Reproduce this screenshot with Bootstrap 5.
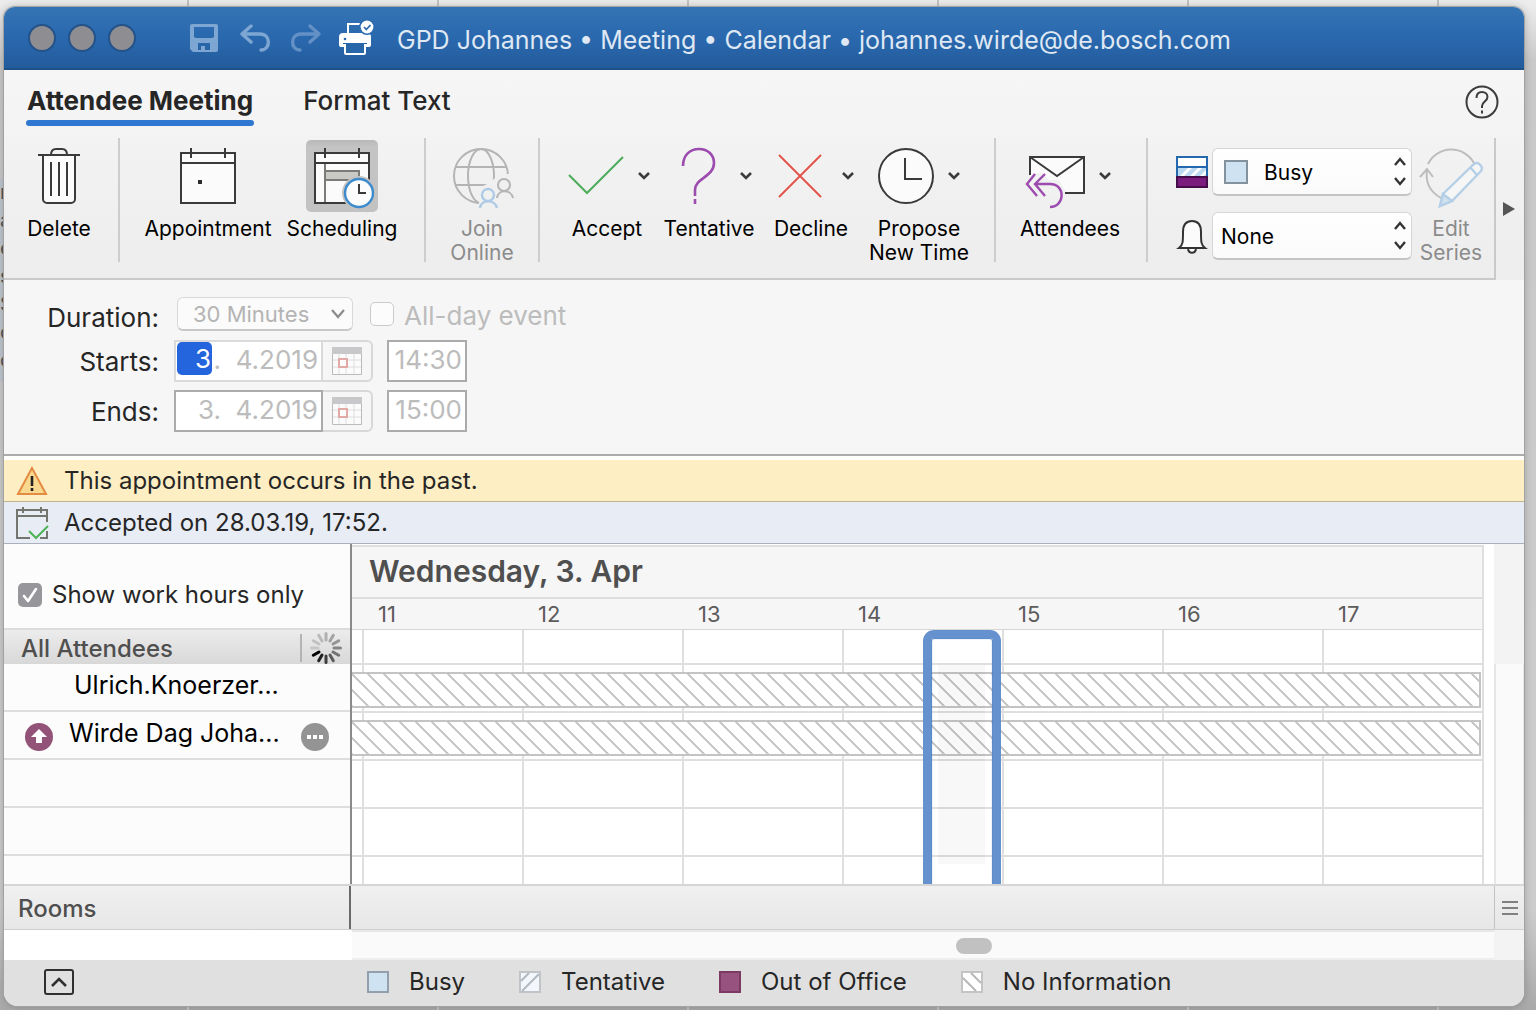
<!DOCTYPE html>
<html lang="en">
<head>
<meta charset="utf-8">
<meta name="viewport" content="width=device-width, initial-scale=1">
<title>GPD Johannes • Meeting • Calendar</title>
<link href="https://cdn.jsdelivr.net/npm/bootstrap@5.3.0/dist/css/bootstrap.min.css" rel="stylesheet">
<style>
  body { font-family: Inter, "Liberation Sans", sans-serif; color: #262626; line-height: 24px; min-height: 100vh;
    background: linear-gradient(to bottom, #ececec 0, #ececec 6px, #c9c9c9 60px, #cdcdcd 90%, #a9a9a9 100%); }
  svg { display: block; overflow: visible; flex: none; }
  button { color: inherit; }
  .desktop { padding: 7px 12px 4px 4px; min-height: 100vh; position: relative; overflow: hidden; }
  .desk-cols { position: absolute; inset: 0; background: repeating-linear-gradient(to right, transparent 0 187px, #c4c4c4 187px 189px, transparent 189px 250px); width: 1439px; }
  .desk-list { position: absolute; left: 0; top: 178px; width: 20px; font-size: 20px; line-height: 28px; color: #555; background: #bfc6ce; padding-bottom: 8px; }
  .app-window { position: relative; border-radius: 11px 11px 14px 14px; overflow: hidden; background: #fff; min-height: calc(100vh - 11px); box-shadow: 0 0 0 1px #a2a2a2, 0 0 8px rgba(0,0,0,.25); }
  .title-bar { height: 63px; background: linear-gradient(#3474b4, #2a68ae 50%, #235c9c); border-bottom: 2px solid #1f5189; color: #dfe8f3; font-size: 25px; padding-left: 24px; }
  .traffic { width: 28px; height: 28px; border-radius: 50%; background: #8e8d92; border: 2px solid #255288; padding: 0; }
  .tool-ic { background: none; border: 0; padding: 0; }
  .quick { margin-left: 54px; gap: 19px; }
  .caption-text { margin-left: 22px; padding-top: 4px; }
  .ribbon { background: linear-gradient(#f6f6f6, #f1f1f1 50%, #ededed); }
  .tabs-row { height: 68px; padding: 15px 25px 0 23px; gap: 50px; }
  .tab-link { font-size: 26px; line-height: 32px; color: #262626; text-decoration: none; font-weight: 500; height: 41px; }
  .tab-link.current { font-weight: 700; position: relative; }
  .tab-link.current::after { content: ""; position: absolute; left: -1px; right: -1px; bottom: 0; height: 6px; border-radius: 3px; background: #3077d1; }
  .tools { border-bottom: 2px solid #c9c9c9; border-right: 2px solid #c9c9c9; height: 142px; }
  .tool-group { height: 124px; border-right: 2px solid #cdcdcd; }
  .tool-group.final { border: 0; }
  .tool-btn { background: none; border: 0; padding: 2px 0 0; font-size: 21px; line-height: 24px; color: #000; display: flex; flex-direction: column; align-items: center; align-self: flex-start; gap: 5px; white-space: nowrap; }
  .tool-btn:disabled { color: #8b8b8b; }
  .pic { height: 72px; display: flex; align-items: center; gap: 14px; }
  .reply .pic { padding-left: 4px; }
  .pic.pressed { background: linear-gradient(#b9b9b9, #c4c4c4 10%, #c2c2c2); width: 72px; border-radius: 5px; justify-content: center; }
  .w-sm { width: 80px; } .w-md { width: 102px; } .w-lg { width: 114px; } .w-xl { width: 134px; }
  .pick { position: relative; height: 48px; }
  .pick select { appearance: none; width: 100%; height: 100%; border: 1px solid #d6d6d6; border-bottom: 2px solid #c4c4c4; border-radius: 6px; background: linear-gradient(#fff, #fafafa); font-size: 21px; color: #000; padding: 3px 8px 0; }
  .pick svg { position: absolute; right: 6px; top: 10px; pointer-events: none; }
  .pick.with-swatch select { padding-left: 51px; }
  .pick i { position: absolute; left: 12px; top: 12px; width: 24px; height: 24px; background: #cfe2f2; border: 2px solid #84929e; }
  .form-area { background: #f6f6f6; border-bottom: 2px solid #a9abad; padding: 16px 0 22px; font-size: 26px; display: grid; gap: 8px 15px; grid-template: 36px 42px 42px / 155px 1fr; }
  .form-area .name { text-align: right; line-height: 44px; height: 36px; }
  .form-line { display: flex; align-items: center; color: #bcbcbc; }
  .length { position: relative; width: 176px; margin-left: 3px; height: 34px; }
  .length select { appearance: none; width: 100%; height: 100%; border: 1px solid #d8d8d8; border-bottom: 2px solid #c8c8c8; border-radius: 6px; background: #fbfbfb; color: #b4b4b4; font-size: 22px; padding: 0 15px; opacity: 1; }
  .length svg { position: absolute; right: 8px; top: 12px; }
  .tick { appearance: none; width: 24px; height: 24px; border: 1px solid #cbcbcb; border-radius: 5px; background: #fcfcfc; margin: 0; }
  .tick.on { border: 0; background: #97969b url("data:image/svg+xml,%3Csvg xmlns='http://www.w3.org/2000/svg' viewBox='0 0 24 24'%3E%3Cpath d='M6 13l4 5 8-12' fill='none' stroke='white' stroke-width='2.6' stroke-linecap='round' stroke-linejoin='round'/%3E%3C/svg%3E"); }
  .day-box { position: relative; }
  .day-box input, .clock-box { border: 2px solid #a9abad; background: #fff; color: #bcbcbc; font-size: 26px; height: 42px; text-align: right; padding: 0 3px 4px; border-radius: 0; }
  .day-box input { width: 149px; display: block; }
  .day-box.light input { border-color: #dadada; }
  .day-box mark { position: absolute; left: 3px; top: 2px; width: 35px; height: 33px; border-radius: 5px; background: #2464dc; color: #fff; padding: 0 1px 0 0; line-height: 34px; text-align: right; }
  .clock-box { width: 80px; margin-left: 14px; }
  .cal-btn { width: 50px; height: 42px; border: 2px solid #d8d8d8; border-left: 0; border-radius: 0 6px 6px 0; background: #f6f6f6; padding: 0; display: grid; place-items: center; }
  .notice { height: 42px; display: flex; align-items: center; font-size: 24px; padding-left: 12px; gap: 16px; }
  .notice.warn { margin-top: 4px; background: #fdeec4; border-bottom: 1px solid #bfb48e; }
  .notice.info { background: #e8ecf5; border-bottom: 1px solid #aab0bd; }
  .side { width: 346px; background: #fcfcfc; }
  .side-top { height: 84px; padding: 18px 0 0 14px; gap: 10px; font-size: 24px; }
  .side-head { height: 36px; border-top: 2px solid #dcdcdc; background: linear-gradient(#ececec, #d8d8d8); color: #4f4f4f; font-size: 24px; font-weight: 500; padding: 4px 8px 0 17px; }
  .side-head .busy { border-left: 2px solid #b4b4b4; height: 28px; padding-left: 8px; }
  .person { height: 48px; border-bottom: 2px solid #dedede; color: #000; font-size: 25px; padding: 0 21px 4px 20px; }
  .person.short { height: 28px; border: 0; }
  .board { border-left: 2px solid #8a8a8a; }
  .hours-pane { margin-right: 10px; border-right: 2px solid #dfdfdf; }
  .day-head { background: #f6f6f6; border-top: 2px solid #dedede; border-bottom: 2px solid #dedede; height: 54px; margin-top: 1px; padding-left: 17px; font-size: 30px; line-height: 49px; font-weight: 600; color: #4f4f4f; }
  .hour-head { background: #f6f6f6; border-bottom: 1px solid #d6d6d6; height: 31px; padding-left: 10px; font-size: 22px; line-height: 31px; color: #5c5c5c; }
  .hour-head span { flex: 1 1 0; padding-left: 16px; }
  .slots { position: relative; height: 254px; overflow: hidden; }
  .slot-cols { position: absolute; inset: 0; padding-left: 10px; display: flex; }
  .slot-cols span { flex: 1 1 0; border-left: 2px solid #dfdfdf; }
  .slot-row { position: relative; height: 48px; border-bottom: 2px solid #dfdfdf; padding: 7px 1px 0 0; }
  .slot-row.lead-in { height: 35px; }
  .unknown { height: 36px; border: 2px solid #c4c4c4; border-left: 0; background: #fff linear-gradient(45deg, #c6c6c6 3%, transparent 5%, transparent 45%, #c6c6c6 47%, #c6c6c6 53%, transparent 55%, transparent 95%, #c6c6c6 97%) 0 0 / 16px 16px; }
  .pickframe { position: absolute; left: 50.5%; width: 6.9%; top: 0; bottom: -20px; border: 8px solid #6592ce; border-radius: 11px; box-shadow: inset 0 0 1px 1px #4d80c3, 0 0 0 0 #4d80c3; }
  .pickframe span { position: absolute; left: 7px; right: 8px; top: 27px; height: 199px; background: rgba(0,0,0,.027); }
  .gutter { width: 30px; background: linear-gradient(#f3f3f3 120px, #fafafa 120px); position: relative; }
  .gutter span { display: block; margin-top: 120px; height: 220px; border-left: 2px solid #e6e6e6; border-right: 1px solid #e6e6e6; }
  .rooms { height: 46px; border-top: 2px solid #d6d6d6; border-bottom: 1px solid #cfcfcf; background: linear-gradient(#f0f0f0, #e7e7e7); color: #4f4f4f; font-size: 24px; font-weight: 500; }
  .rooms .cap { width: 347px; padding-left: 14px; border-right: 2px solid #6a6a6a; height: 43px; line-height: 45px; }
  .rooms button { width: 30px; border: 0; border-left: 1px solid #c2c2c2; background: none; padding: 0 0 0 7px; }
  .hscroll { height: 30px; }
  .hscroll .blank { width: 348px; }
  .hscroll .track { background: #fafafa; border-top: 2px solid #e8e8e8; border-bottom: 2px solid #eee; position: relative; }
  .hscroll .thumb { position: absolute; left: 52.9%; top: 6px; width: 36px; height: 16px; border-radius: 8px; background: #c1c1c1; }
  .hscroll .corner { width: 30px; background: #f3f3f3; }
  .legend-bar { height: 46px; background: #e0e0e0; font-size: 24px; padding: 0 0 2px 40px; }
  .expand { width: 30px; height: 26px; border: 2px solid #303030; border-radius: 3px; background: none; padding: 0; margin-right: 293px; display: grid; place-items: center; }
  .legend { gap: 54px; }
  .legend span { display: flex; align-items: center; gap: 20px; white-space: nowrap; }
</style>
<script src="https://cdn.jsdelivr.net/npm/bootstrap@5.3.0/dist/js/bootstrap.bundle.min.js"></script>
</head>
<body>
<div class="desktop">
  <div class="desk-cols"></div>
  <div class="desk-list" aria-hidden="true">r<br>a<br>e<br>s<br>S<br>c<br>c</div>
  <main class="app-window d-flex flex-column">
    <header class="title-bar d-flex align-items-center">
      <div class="d-flex" style="gap:12px">
        <button class="traffic" aria-label="Close"></button><button class="traffic" aria-label="Minimise"></button><button class="traffic" aria-label="Zoom"></button>
      </div>
      <div class="quick d-flex align-items-center">
        <button class="tool-ic" aria-label="Save"><svg width="28" height="28" viewBox="0 0 28 28"><path d="M2 0h24a2 2 0 0 1 2 2v24a2 2 0 0 1-2 2H3l-3-3V2a2 2 0 0 1 2-2zM4 3v10l2 1h16l2-1V3zM8 19v7h3v-4h4v4h5v-7z" fill="#7ea6d2" fill-rule="evenodd"/></svg></button>
        <button class="tool-ic ps-1" aria-label="Undo"><svg width="30" height="28" viewBox="0 0 30 28" fill="none" stroke="#7ea6d2" stroke-width="3.400" stroke-linecap="round" stroke-linejoin="round"><path d="M10 2L1 10l9 8M1 10h18c11 0 11 16 1 16"/></svg></button>
        <button class="tool-ic" aria-label="Redo"><svg width="30" height="28" viewBox="0 0 30 28" fill="none" stroke="#6390c5" stroke-width="3.400" stroke-linecap="round" stroke-linejoin="round"><path d="M20 2l9 8-9 8M29 10H11c-11 0-11 16-1 16"/></svg></button>
        <button class="tool-ic" aria-label="Print"><svg width="36" height="34" viewBox="0 0 36 34"><path d="M9 13V3h13" fill="none" stroke="#fff" stroke-width="2"/><path d="M4 12h24a4 4 0 0 1 4 4v8a2 2 0 0 1-2 2H2a2 2 0 0 1-2-2v-8a4 4 0 0 1 4-4z" fill="#fff"/><path d="M5 24h22v8a2 2 0 0 1-2 2H7a2 2 0 0 1-2-2z" fill="#fff"/><path d="M4 23v-1h24v1h-3v9H7v-9z" fill="#2866aa"/><circle cx="6" cy="18" r="1.300" fill="#2a68ae"/><circle cx="28" cy="6" r="8" fill="#2c6cb1"/><circle cx="28" cy="6" r="6.400" fill="#fff"/><path d="M25 6l2.300 2.500L31.500 4" fill="none" stroke="#2c6cb1" stroke-width="1.800"/></svg></button>
      </div>
      <span class="caption-text text-nowrap">GPD Johannes • Meeting • Calendar • johannes.wirde@de.bosch.com</span>
    </header>

    <section class="ribbon">
      <nav class="tabs-row d-flex align-items-start">
        <a class="tab-link current" href="#">Attendee Meeting</a>
        <a class="tab-link" href="#">Format Text</a>
        <button class="tool-ic ms-auto" aria-label="Help"><svg width="34" height="34" viewBox="0 0 34 34" fill="none" stroke="#3c3c3c" stroke-width="2"><circle cx="17" cy="17" r="15.500"/><path d="M11.500 13c0-4 2.500-6 5.500-6s5.500 2 5.500 5c0 4-5.500 5-5.500 9v2M17 25.500v3"/></svg></button>
      </nav>
      <div class="d-flex">
        <div class="tools d-flex flex-grow-1">
          <div class="tool-group" style="padding:0 19px 0 15px">
            <button class="tool-btn w-sm"><span class="pic"><svg width="42" height="56" viewBox="0 0 42 56" fill="none" stroke="#3a3a3a" stroke-width="2"><path d="M5 7h32v44a4 4 0 0 1-4 4H9a4 4 0 0 1-4-4z" fill="#fbfbfb"/><path d="M0 7h42M13 7c0-4 2-6 5-6h6c3 0 5 2 5 6M13 14v34M21 14v34M29 14v34"/></svg></span>Delete</button>
          </div>
          <div class="tool-group d-flex" style="padding:0 15px 0 21px">
            <button class="tool-btn w-xl"><span class="pic"><svg width="56" height="56" viewBox="0 0 56 56" fill="none" stroke="#3a3a3a" stroke-width="2"><path d="M1 5h54v50H1z" fill="#fbfbfb"/><path d="M1 15h54M11 0v10M45 0v10"/><path d="M18 32h4v4h-4z" fill="#2c2c2c" stroke="none"/></svg></span>Appointment</button>
            <button class="tool-btn w-xl"><span class="pic pressed"><svg width="56" height="56" viewBox="0 0 56 56" fill="none" stroke="#3a3a3a" stroke-width="2"><path d="M1 5h54v50H1z" fill="#fbfbfb"/><path d="M1 15h54M11 0v10M45 0v10"/><path d="M11 16v38M11 23h34v9H11z" stroke="#7b7b77" fill="#c9c9c5"/><circle cx="45" cy="45" r="17" fill="#c3c3c3" stroke="none"/><circle cx="45" cy="45" r="14" fill="#fcfcfc" stroke="#3d8bcc" stroke-width="2.400"/><path d="M45 36v9h7"/></svg></span>Scheduling</button>
          </div>
          <div class="tool-group d-flex justify-content-center" style="width:114px">
            <button class="tool-btn w-sm" disabled><span class="pic"><svg width="58" height="56" viewBox="0 0 58 56" fill="none" stroke="#b4b4b4" stroke-width="2"><circle cx="28" cy="28" r="27"/><ellipse cx="28" cy="28" rx="13" ry="27"/><path d="M3 19h50M3 37h50"/><path d="M26 60V40l12-6 8-8h14v34z" fill="#f0f0f0" stroke="none"/><circle cx="51" cy="37" r="6"/><path d="M44 50c1-9 14-9 16 0" /><g stroke="#aecbe6" stroke-width="2.400"><circle cx="35" cy="47" r="6"/><path d="M27 60c1-9 15-9 17 0"/></g></svg></span><span>Join<br>Online</span></button>
          </div>
          <div class="tool-group d-flex" style="padding:0 18px 0 16px">
            <button class="tool-btn reply w-md"><span class="pic"><svg width="56" height="56" viewBox="0 0 56 56"><path d="M1 27l18 18L55 9" fill="none" stroke="#4dac5a" stroke-width="2"/></svg><svg width="12" height="8" viewBox="0 0 12 8"><path d="M1 1l5 5 5-5" fill="none" stroke="#3c3c3c" stroke-width="2.600"/></svg></span>Accept</button>
            <button class="tool-btn reply w-md"><span class="pic"><svg width="56" height="56" viewBox="0 0 56 56"><path d="M13 18C13 7 20 1 29 1s15 6 15 14c0 14-19 15-19 27v6M25 51v5" fill="none" stroke="#9c4bae" stroke-width="2.600"/></svg><svg width="12" height="8" viewBox="0 0 12 8"><path d="M1 1l5 5 5-5" fill="none" stroke="#3c3c3c" stroke-width="2.600"/></svg></span>Tentative</button>
            <button class="tool-btn reply w-md"><span class="pic"><svg width="56" height="56" viewBox="0 0 56 56"><path d="M7 7l42 42M49 7L7 49" fill="none" stroke="#e25549" stroke-width="2"/></svg><svg width="12" height="8" viewBox="0 0 12 8"><path d="M1 1l5 5 5-5" fill="none" stroke="#3c3c3c" stroke-width="2.600"/></svg></span>Decline</button>
            <button class="tool-btn w-lg"><span class="pic"><svg width="56" height="56" viewBox="0 0 56 56" fill="none" stroke="#3a3a3a" stroke-width="2"><circle cx="28" cy="28" r="27" fill="#fbfbfb"/><path d="M27 10v21h17"/></svg><svg width="12" height="8" viewBox="0 0 12 8"><path d="M1 1l5 5 5-5" fill="none" stroke="#3c3c3c" stroke-width="2.600"/></svg></span><span>Propose<br>New Time</span></button>
          </div>
          <div class="tool-group d-flex" style="padding:0 25px 0 23px">
            <button class="tool-btn w-md"><span class="pic"><svg width="56" height="56" viewBox="0 0 56 56" fill="none" stroke="#3a3a3a" stroke-width="2"><path d="M1 9h54v36H1z" fill="#fbfbfb" stroke="none"/><path d="M0 46V28l12-4 8 8h10l8 14z" fill="#f1f1f1" stroke="none"/><path d="M1 27V9h54v36H36M1 9l27 19L55 9"/><g stroke="#9c4bae" stroke-width="2.400"><path d="M6 26L-2 36l10 12M16 26L6 36l10 12M6 36h15c16 0 15 23 0 23"/></g></svg><svg width="12" height="8" viewBox="0 0 12 8"><path d="M1 1l5 5 5-5" fill="none" stroke="#3c3c3c" stroke-width="2.600"/></svg></span>Attendees</button>
          </div>
          <div class="tool-group final d-flex flex-grow-1" style="padding:0 4px 0 28px">
            <div class="d-flex flex-column gap-3 flex-grow-1" style="padding-top:10px">
              <div class="d-flex align-items-center gap-1">
                <svg width="32" height="32" viewBox="0 0 32 32"><path d="M1 1h30v20H1z" fill="#fff" stroke="#2468ae" stroke-width="2"/><path d="M2 12h28v8H2z" fill="#bcd9f2"/><path d="M4 20l8-8h4l-8 8zM14 20l8-8h4l-8 8zM24 20l6-6v4l-2 2z" fill="#fff"/><path d="M0 11h32" stroke="#2468ae" stroke-width="2"/><path d="M1 21h30v10H1z" fill="#7a1b7d" stroke="#440c48" stroke-width="2"/></svg>
                <div class="pick with-swatch flex-grow-1"><select aria-label="Show as"><option>Busy</option></select><i></i><svg width="12" height="28" viewBox="0 0 12 28" fill="none" stroke="#333" stroke-width="2.400"><path d="M1 7l5-6 5 6M1 20l5 6 5-6"/></svg></div>
              </div>
              <div class="d-flex align-items-center gap-1">
                <svg width="32" height="34" viewBox="0 0 32 34" fill="none" stroke="#333" stroke-width="2"><path d="M3 29c4-3 4-6 4-16C7 5 11 2 16 2s9 3 9 11c0 10 0 13 4 16zM12 30c1 5 7 5 8 0" fill="#fbfbfb"/></svg>
                <div class="pick flex-grow-1"><select aria-label="Reminder"><option>None</option></select><svg width="12" height="28" viewBox="0 0 12 28" fill="none" stroke="#333" stroke-width="2.400"><path d="M1 7l5-6 5 6M1 20l5 6 5-6"/></svg></div>
              </div>
            </div>
            <button class="tool-btn" style="width:78px" disabled><span class="pic"><svg width="64" height="60" viewBox="0 0 64 60" fill="none" stroke="#bdbdbd" stroke-width="2"><path d="M9 18a26 26 0 0 1 46-1M1 31l7-8 6 8M8 24c-2 14 5 23 14 28"/><g stroke="#b4cfe6" stroke-width="2.400"><path d="M24 48l31-30c4-3 10 3 7 7L33 55l-12 5z" fill="#f6f6f6"/><path d="M24 48l9 7-12 5zM51 21l7 8" fill="#cfe0ee"/></g></svg></span><span>Edit<br>Series</span></button>
          </div>
        </div>
        <button class="tool-ic d-flex align-items-center" style="width:28px;padding-left:7px" aria-label="More"><svg width="12" height="14" viewBox="0 0 12 14"><path d="M0 0l12 7-12 7z" fill="#555"/></svg></button>
      </div>
    </section>

    <section class="form-area">
      <label class="name" for="len">Duration:</label>
      <div class="form-line">
        <div class="length"><select id="len" disabled><option>30 Minutes</option></select><svg width="14" height="10" viewBox="0 0 14 10"><path d="M1 1l6 7 6-7" fill="none" stroke="#8c8c8c" stroke-width="2.200"/></svg></div>
        <input class="tick" type="checkbox" id="allday" disabled style="margin-left:17px"><label for="allday" style="margin:4px 0 0 10px">All-day event</label>
      </div>
      <label class="name" for="sd">Starts:</label>
      <div class="form-line">
        <div class="day-box light"><input id="sd" type="text" disabled value=".  4.2019"><mark>3</mark></div>
        <button class="cal-btn" aria-label="Pick start day"><svg width="30" height="28" viewBox="0 0 30 28"><path d="M.5.500h29v27H.5z" fill="#fbfbfb" stroke="#bbb"/><path d="M0 0h30v7H0z" fill="#c8c8ca"/><path d="M7 7v20M14 7v20M22 7v20M1 13h28M1 20h28" stroke="#dedede"/><path d="M7 12h8v8H7z" fill="#fbfbfb" stroke="#e2a9a6" stroke-width="2"/></svg></button>
        <input class="clock-box" type="text" aria-label="Start time" disabled value="14:30">
      </div>
      <label class="name" for="ed">Ends:</label>
      <div class="form-line">
        <div class="day-box"><input id="ed" type="text" disabled value="3.  4.2019"></div>
        <button class="cal-btn" aria-label="Pick end day"><svg width="30" height="28" viewBox="0 0 30 28"><path d="M.5.500h29v27H.5z" fill="#fbfbfb" stroke="#bbb"/><path d="M0 0h30v7H0z" fill="#c8c8ca"/><path d="M7 7v20M14 7v20M22 7v20M1 13h28M1 20h28" stroke="#dedede"/><path d="M7 12h8v8H7z" fill="#fbfbfb" stroke="#e2a9a6" stroke-width="2"/></svg></button>
        <input class="clock-box" type="text" aria-label="End time" disabled value="15:00">
      </div>
    </section>

    <div class="notice warn"><svg width="32" height="32" viewBox="0 0 32 32"><path d="M16 3L2 29h28z" fill="#f8d98f" stroke="#e48b43" stroke-width="2"/><path d="M16 11v10M16 23v3" stroke="#222" stroke-width="2.600"/></svg>This appointment occurs in the past.</div>
    <div class="notice info"><svg width="32" height="32" viewBox="0 0 32 32" fill="none" stroke="#75756f" stroke-width="2"><path d="M31 15V3H1v28h13M24 31h7v-7M1 9h30M7 0v6M25 0v6"/><path d="M13 24l7 7 12-12" stroke="#4db356"/></svg>Accepted on 28.03.19, 17:52.</div>

    <section class="d-flex">
      <aside class="side">
        <div class="side-top d-flex align-items-center"><input class="tick on" type="checkbox" id="work" checked><label for="work">Show work hours only</label></div>
        <div class="side-head d-flex justify-content-between"><span style="line-height:30px">All Attendees</span>
          <span class="busy"><svg width="32" height="32" viewBox="-16 -16 32 32" stroke-width="3" stroke-linecap="round" style="margin-top:-2px"><path d="M0-8v-6.500" stroke="#b0b0b0"/><path d="M4-7l3.300-5.700" stroke="#a2a2a2"/><path d="M7-4l5.700-3.300" stroke="#959595"/><path d="M8 0h6.500" stroke="#858585"/><path d="M7 4l5.700 3.300" stroke="#727272"/><path d="M4 7l3.300 5.700" stroke="#5a5a5a"/><path d="M0 8v6.500" stroke="#3c3c3c"/><path d="M-4 7l-3.300 5.700" stroke="#1e1e1e"/><path d="M-7 4l-5.700 3.300" stroke="#000"/><path d="M-8 0h-6.500" stroke="#c6c6c6"/><path d="M-7-4l-5.700-3.300" stroke="#c2c2c2"/><path d="M-4-7l-3.300-5.700" stroke="#bababa"/></svg></span></div>
        <div class="person d-flex align-items-center" style="padding-left:70px">Ulrich.Knoerzer...</div>
        <div class="person d-flex align-items-center"><svg class="mt-2" width="30" height="28" viewBox="-1 0 30 28"><circle cx="14" cy="14" r="14" fill="#935378"/><path d="M14 6l8 8h-5v6h-6v-6H6z" fill="#fff"/></svg><span style="margin-left:15px">Wirde Dag Joha...</span><button class="tool-ic ms-auto mt-2" aria-label="More"><svg width="28" height="28" viewBox="0 0 28 28"><circle cx="14" cy="14" r="14" fill="#949494"/><path d="M6 12h4v4H6zM12 12h4v4h-4zM18 12h4v4h-4z" fill="#fff"/></svg></button></div>
        <div class="person"></div><div class="person"></div><div class="person short"></div>
      </aside>
      <div class="board flex-grow-1">
        <div class="hours-pane">
          <div class="day-head">Wednesday, 3. Apr</div>
          <div class="hour-head d-flex"><span>11</span><span>12</span><span>13</span><span>14</span><span>15</span><span>16</span><span>17</span></div>
          <div class="slots">
            <div class="slot-cols"><span></span><span></span><span></span><span></span><span></span><span></span><span></span></div>
            <div class="slot-row lead-in"></div>
            <div class="slot-row"><div class="unknown"></div></div>
            <div class="slot-row"><div class="unknown"></div></div>
            <div class="slot-row"></div><div class="slot-row"></div>
            <div class="pickframe"><span></span></div>
          </div>
        </div>
      </div>
      <div class="gutter"><span></span></div>
    </section>

    <div class="rooms d-flex"><div class="cap">Rooms</div><button class="ms-auto" aria-label="Resize"><svg width="16" height="14" viewBox="0 0 16 14"><path d="M0 1h16M0 7h16M0 13h16" stroke="#808080" stroke-width="2"/></svg></button></div>
    <div class="hscroll d-flex"><div class="blank"></div><div class="track flex-grow-1"><div class="thumb"></div></div><div class="corner"></div></div>
    <footer class="legend-bar d-flex align-items-center flex-grow-1">
      <button class="expand" aria-label="Collapse"><svg width="16" height="10" viewBox="0 0 16 10"><path d="M1 9l7-7 7 7" fill="none" stroke="#303030" stroke-width="2.600"/></svg></button>
      <div class="legend d-flex">
        <span><svg width="22" height="22" viewBox="0 0 22 22"><path d="M1 1h20v20H1z" fill="#cfe2f2" stroke="#93a0ab" stroke-width="2"/></svg>Busy</span>
        <span><svg width="22" height="22" viewBox="0 0 22 22"><path d="M1 1h20v20H1z" fill="#f3f7fb" stroke="#c0c4c8" stroke-width="2"/><path d="M2 10l8-8M3 20L20 3" stroke="#b0b8c0" stroke-width="2"/></svg>Tentative</span>
        <span><svg width="22" height="22" viewBox="0 0 22 22"><path d="M1 1h20v20H1z" fill="#98527f" stroke="#7a3a62" stroke-width="2"/></svg>Out of Office</span>
        <span><svg width="22" height="22" viewBox="0 0 22 22"><path d="M1 1h20v20H1z" fill="#fff" stroke="#c4c4c4" stroke-width="2"/><path d="M2 7l13 13M10 2l10 10" stroke="#b8b8b8" stroke-width="2"/></svg>No Information</span>
      </div>
    </footer>
  </main>
</div>
</body>
</html>
